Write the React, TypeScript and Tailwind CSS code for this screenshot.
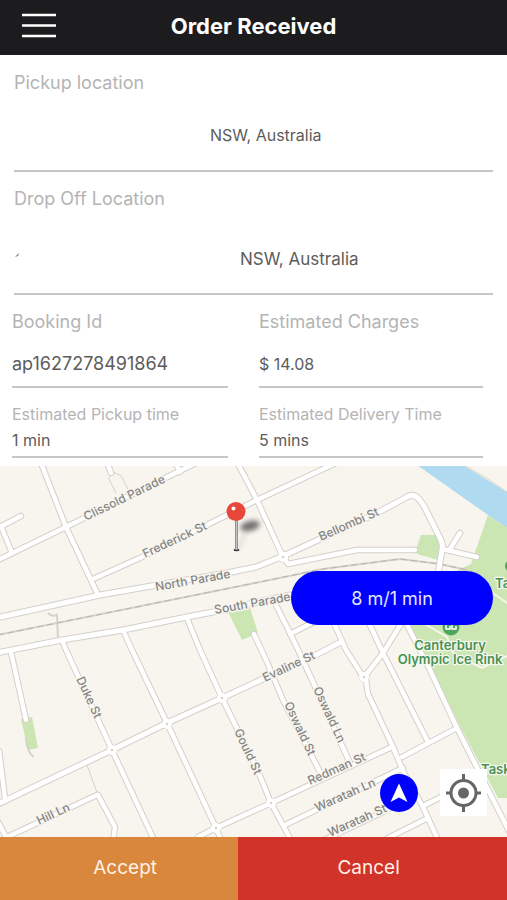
const MAJOR_ROADS = [
  "M-4 152 L100 129 L157 119 L227 107 L256 101 L281 91 L318 74 L377 47 L407 31 Q413 27 419 33 L424 40 L441 74 Q443 79 442 84 L438 108",
  "M-4 187 L62 174 L123 164 L187 151 L213 146 L290 129",
  "M-4 339 L112 284 L167 257 L222 232 L263 213 L312 191 L341 176",
];

const ROADS = [
  "M41 -3 L66 61 L98 129",
  "M-4 95 L66 61 L157 16 L202 -6",
  "M-4 63 L21 50",
  "M1 60 L12 87",
  "M107 -4 L111 7",
  "M175 -4 L180 6",
  "M93 113 L142 91 L203 61 L257 34 L336 -3",
  "M237 -4 L257 34 L283 91",
  "M283 90 L288 98 L357 84 L415 84",
  "M442 83 L477 91",
  "M450 83 L460 67",
  "M11 186 L26 254",
  "M62 174 L66 184 L112 284 L155 376",
  "M123 164 L132 184 L167 257 L216 362 L222 376",
  "M187 152 L200 184 L222 232 L258 305 L271 337 L292 376",
  "M254 168 L267 196 L283 234 L322 310",
  "M275 137 L290 167 L302 192 L350 297",
  "M290 168 L318 154 L333 147",
  "M333 155 L346 184 L360 206 L366 214 L368 228 L393 281 L404 307 L423 341 L439 376",
  "M368 155 L383 187 L428 276",
  "M404 153 L383 187 L365 210",
  "M404 153 L430 204 L457 262 L512 371",
  "M198 371 L216 362 L271 337 L392 281",
  "M402 291 L457 262",
  "M285 359 L403 302",
  "M320 376 L383 346 L400 337",
  "M423 340 L455 324",
  "M388 372 L428 352",
  "M5 372 L97 329",
  "M98 329 L115 361 L113 376",
  "M-1 285 L5 332",
  "M-3 354 L6 371",
];

const JUNCTIONS = [
  [283, 91],
  [112, 284],
  [167, 258],
  [222, 232],
  [216, 362],
  [364, 211],
  [271, 337],
];

const STREET_LABELS = [
  { name: "Clissold Parade", x: 86, y: 55, angle: -26 },
  { name: "Frederick St", x: 145, y: 92, angle: -25 },
  { name: "North Parade", x: 156, y: 125, angle: -10 },
  { name: "South Parade", x: 215, y: 148, angle: -10 },
  { name: "Bellombi St", x: 321, y: 75, angle: -24 },
  { name: "Evaline St", x: 265, y: 216, angle: -25 },
  { name: "Duke St", x: 76, y: 213, angle: 65 },
  { name: "Gould St", x: 234, y: 265, angle: 65 },
  { name: "Oswald St", x: 284, y: 238, angle: 65 },
  { name: "Oswald Ln", x: 313, y: 223, angle: 65 },
  { name: "Redman St", x: 310, y: 319, angle: -24 },
  { name: "Waratah Ln", x: 317, y: 346, angle: -24 },
  { name: "Waratah St", x: 330, y: 371, angle: -24 },
  { name: "Hill Ln", x: 39, y: 359, angle: -25 },
];

function Field({
  label,
  value,
  labelClass,
  valueClass,
  className,
}: {
  label: string;
  value: string;
  labelClass: string;
  valueClass: string;
  className: string;
}) {
  return (
    <div className={`border-b-2 border-[#c6c6c6] ${className}`}>
      <dt className={`text-[#b4b4b4] ${labelClass}`}>{label}</dt>
      <dd className={`text-[#5c5c5c] ${valueClass}`}>{value}</dd>
    </div>
  );
}

function StreetMap() {
  return (
    <svg
      className="absolute inset-0 w-full h-full"
      viewBox="0 0 507 371"
      preserveAspectRatio="xMidYMid slice"
      role="img"
      aria-label="Map of the pickup area"
    >
      <defs>
        <filter id="pin-shadow" x="-50%" y="-50%" width="200%" height="200%">
          <feGaussianBlur stdDeviation="2.5" />
        </filter>
      </defs>
      <rect width="507" height="371" fill="#f8f5ee" />

      {/* river and parks */}
      <path d="M417 -1 L463 -1 L507 26 V62 L488 49 Z" fill="#b0daf0" />
      <path d="M463 -1 Q482 8 507 26" fill="none" stroke="#ddd6c4" />
      <g fill="#cbe6b3">
        <path d="M488 49 L471 98 L458 104 L404 150 L430 200 L460 260 L498 332 L507 332 V62 Z" />
        <path d="M421 69 H440 L438 94 L417 88 L416 83 Z" />
        <path d="M228 146 L250 142 L258 167 L242 174 Z" />
        <path d="M21 253 L32 251 L38 282 L28 284 Z" />
      </g>

      {/* paths and railway */}
      <g fill="none" stroke="#d5d1cb">
        <path d="M116 27 L109 13 Q110 7 115 7 Q121 8 123 13 L129 26" />
        <path d="M48 147 Q52 151 57 149 L58 174" strokeWidth="2" />
        <path d="M26 272 Q27 287 34 291" strokeWidth="2" />
        <path d="M87 299 L98 329" />
        <path d="M-2 169 L250 118 L323 103 L400 93 L440 98 L467 104" strokeWidth="2" />
        <path
          d="M-2 169 L250 118 L323 103 L400 93 L440 98 L467 104"
          stroke="#b9b4ad"
          strokeDasharray="6 4"
        />
      </g>
      <g fill="none" stroke="#f8f5ee" strokeWidth="2">
        <path d="M425 158 L447 171 L454 189 L482 202 L507 190" />
        <path d="M490 125 L507 137" />
      </g>

      {/* roads: casing first, then the white surface */}
      <g fill="none" stroke="#d3d0cb" strokeLinecap="round" strokeLinejoin="round">
        {ROADS.map((d) => (
          <path key={d} d={d} strokeWidth="6.5" />
        ))}
        {MAJOR_ROADS.map((d) => (
          <path key={d} d={d} strokeWidth="7" />
        ))}
        {JUNCTIONS.map(([x, y]) => (
          <circle key={`${x}-${y}`} cx={x} cy={y} r="5" />
        ))}
      </g>
      <g fill="none" stroke="#ffffff" strokeLinecap="round" strokeLinejoin="round">
        {ROADS.map((d) => (
          <path key={d} d={d} strokeWidth="4.5" />
        ))}
        {MAJOR_ROADS.map((d) => (
          <path key={d} d={d} strokeWidth="5" />
        ))}
      </g>
      {JUNCTIONS.map(([x, y]) => (
        <g key={`${x}-${y}`}>
          <circle cx={x} cy={y} r="5" fill="#ffffff" />
          <circle cx={x} cy={y} r="1.2" fill="#d3d0cb" />
        </g>
      ))}

      {/* labels */}
      <g
        className="text-[12px] font-medium"
        fill="#858585"
        stroke="#f8f5ee"
        strokeWidth="3"
        strokeLinejoin="round"
        paintOrder="stroke"
      >
        {STREET_LABELS.map(({ name, x, y, angle }) => (
          <text key={name} transform={`translate(${x} ${y}) rotate(${angle})`}>
            {name}
          </text>
        ))}
      </g>
      <circle cx="451" cy="161" r="8.5" fill="#4fa55c" />
      <path
        d="M446 158 V163 H450 V160 M452 158 V163 H456 V160"
        fill="none"
        stroke="#ffffff"
        strokeWidth="1.5"
      />
      <circle cx="511" cy="100" r="6" fill="#4fa55c" />
      <g
        className="text-[13px] font-semibold"
        fill="#4b9155"
        stroke="#f4f8ec"
        strokeWidth="2.5"
        strokeLinejoin="round"
        paintOrder="stroke"
      >
        <text x="450" y="184" textAnchor="middle">Canterbury</text>
        <text x="450" y="198" textAnchor="middle">Olympic Ice Rink</text>
        <text x="495" y="122">Ta</text>
        <text x="481" y="308">Task</text>
      </g>

      {/* pickup pin */}
      <ellipse
        cx="250"
        cy="60"
        rx="10"
        ry="5"
        fill="#444444"
        opacity="0.75"
        transform="rotate(-14 250 60)"
        filter="url(#pin-shadow)"
      />
      <path d="M238 83 L246 66" stroke="#999999" strokeWidth="3" opacity="0.3" filter="url(#pin-shadow)" />
      <ellipse cx="236.500" cy="84" rx="3" ry="1.300" fill="#3c3c3c" />
      <rect x="235" y="53" width="3" height="31" fill="#929292" />
      <rect x="236" y="53" width="1" height="30" fill="#c4c4c4" />
      <circle cx="236" cy="45.500" r="9.500" fill="#e8483a" />
      <circle cx="233.500" cy="42.500" r="2" fill="#ffffff" />
    </svg>
  );
}

export default function App() {
  return (
    <div className="min-h-screen flex flex-col bg-white font-['Inter','Liberation_Sans',sans-serif]">
      <header className="h-[55px] shrink-0 grid grid-cols-[1fr_auto_1fr] items-center bg-[#1c1c1e] pb-1">
        <button aria-label="Open menu" className="justify-self-start ml-[17px] text-white">
          <svg className="w-11 h-8" viewBox="0 0 44 32" stroke="currentColor" strokeWidth="2.5">
            <path d="M5 5 H39 M5 15.500 H39 M5 26 H39" />
          </svg>
        </button>
        <h1 className="text-[22px] leading-7 font-bold text-white">Order Received</h1>
      </header>

      <main className="flex-1 flex flex-col">
        <dl className="px-[14px]">
          <Field
            label="Pickup location"
            value="NSW, Australia"
            className="pt-4 pb-[23px]"
            labelClass="text-[18px] leading-6"
            valueClass="mt-7 pl-[196px] text-[16px] leading-6"
          />
          <div className="relative">
            <Field
              label="Drop Off Location"
              value="NSW, Australia"
              className="pt-[15px] pb-[22px]"
              labelClass="text-[18px] leading-6"
              valueClass="mt-9 pl-[226px] text-[17px] leading-6"
            />
            <svg className="absolute left-0 top-20 w-2 h-2" viewBox="0 0 8 8" aria-hidden="true">
              <path d="M1 5 L5 1 L4 4 Z" fill="#777777" />
            </svg>
          </div>
        </dl>

        <dl className="grid grid-cols-[27fr_28fr] gap-x-[31px] pl-3 pr-6 pb-2">
          <Field
            label="Booking Id"
            value="ap1627278491864"
            className="pt-[15px] pb-[10px]"
            labelClass="text-[18px] leading-6"
            valueClass="mt-[18px] text-[18px] leading-6"
          />
          <Field
            label="Estimated Charges"
            value="$ 14.08"
            className="pt-[15px] pb-[10px]"
            labelClass="text-[18px] leading-6"
            valueClass="mt-[18px] text-[16px] leading-6"
          />
          <Field
            label="Estimated Pickup time"
            value="1 min"
            className="pt-[14px] pb-1"
            labelClass="text-[16px] leading-6"
            valueClass="mt-[2px] text-[16px] leading-6"
          />
          <Field
            label="Estimated Delivery Time"
            value="5 mins"
            className="pt-[14px] pb-1"
            labelClass="text-[16px] leading-6"
            valueClass="mt-[2px] text-[16px] leading-6"
          />
        </dl>

        <section className="relative flex-1 min-h-[360px] overflow-hidden">
          <StreetMap />
          <div className="absolute right-[14px] top-[105px] w-[202px] h-[54px] flex items-center justify-center rounded-full bg-[#0000ff] text-[18px] text-[#e6e6ff]">
            8 m/1 min
          </div>
          <div className="absolute right-5 bottom-[21px] flex items-center gap-[22px]">
            <button
              aria-label="Start navigation"
              className="w-[38px] h-[38px] rounded-full bg-[#0000ff] flex items-center justify-center"
            >
              <svg className="w-[38px] h-[38px]" viewBox="0 0 38 38" fill="#ffffff">
                <path d="M19 9.500 L27.500 28 L19 23.500 L10.500 28 Z" />
              </svg>
            </button>
            <button
              aria-label="Center on my location"
              className="w-[47px] h-[47px] bg-white flex items-center justify-center"
            >
              <svg className="w-[47px] h-[47px]" viewBox="0 0 47 47" fill="none" stroke="#666666">
                <circle cx="23.500" cy="24" r="12.500" strokeWidth="3" />
                <circle cx="23.500" cy="24" r="5.500" fill="#666666" stroke="none" />
                <path d="M23.500 5 V12 M23.500 36 V43 M6 24 H12 M35 24 H41" strokeWidth="3" />
              </svg>
            </button>
          </div>
        </section>
      </main>

      <footer className="shrink-0 grid grid-cols-[47fr_53fr] h-[63px] text-[19px] text-[#fff1e6]">
        <button className="bg-[#d9873c] pl-3">Accept</button>
        <button className="bg-[#d13329] pr-2">Cancel</button>
      </footer>
    </div>
  );
}
